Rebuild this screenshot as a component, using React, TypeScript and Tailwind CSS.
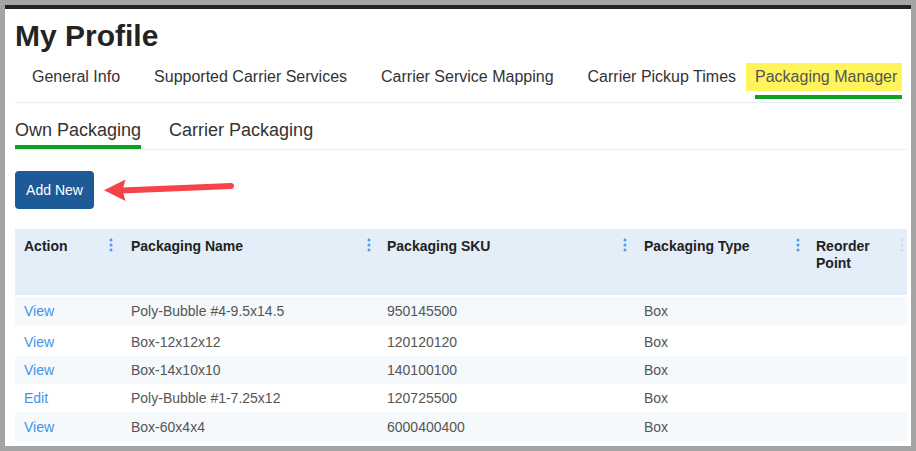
import React from "react";

function Kebab({ faint }: { faint?: boolean }) {
  const c = faint ? "#d3dbe5" : "#4c9bef";
  return (
    <svg width="4" height="14" viewBox="0 0 4 14" className="block">
      <circle cx="2" cy="2" r="1.5" fill={c} />
      <circle cx="2" cy="7" r="1.5" fill={c} />
      <circle cx="2" cy="12" r="1.5" fill={c} />
    </svg>
  );
}

const rows = [
  { a: "View", n: "Poly-Bubble #4-9.5x14.5", s: "950145500", t: "Box", h: "h-[28px]", bg: "bg-[#f5f9fc]" },
  { a: "View", n: "Box-12x12x12", s: "120120120", t: "Box", h: "h-[31px] pt-[2px]", bg: "bg-white" },
  { a: "View", n: "Box-14x10x10", s: "140100100", t: "Box", h: "h-[28px]", bg: "bg-[#f5f9fc]" },
  { a: "Edit", n: "Poly-Bubble #1-7.25x12", s: "120725500", t: "Box", h: "h-[28px]", bg: "bg-white" },
  { a: "View", n: "Box-60x4x4", s: "6000400400", t: "Box", h: "h-[29px]", bg: "bg-[#f5f9fc]" },
];

export default function App() {
  return (
    <div className="w-[916px] h-[451px] bg-[#a4a4a4] p-[5px] font-['Liberation_Sans',Arial,sans-serif]">
      <div className="w-[906px] h-[441px] bg-white border-t-[4px] border-[#222222] overflow-hidden">
        <div className="pl-[10px] pr-[4px]">
          {/* Title */}
          <h1 className="mt-[9px] text-[30px] leading-[36px] font-bold text-[#232323]">My Profile</h1>

          {/* Main tabs */}
          <div className="mt-[9px] border-b border-[#e4eff6] pb-[3px]">
            <div className="flex pl-[17px] text-[16px] text-[#333333]">
              <div className="flex flex-col mr-[34px]">
                <div className="h-[28px] flex items-center leading-[24px]">General Info</div>
                <div className="h-[4px] mt-[4px]" />
              </div>
              <div className="flex flex-col mr-[34px]">
                <div className="h-[28px] flex items-center leading-[24px]">Supported Carrier Services</div>
                <div className="h-[4px] mt-[4px]" />
              </div>
              <div className="flex flex-col mr-[34px]">
                <div className="h-[28px] flex items-center leading-[24px]">Carrier Service Mapping</div>
                <div className="h-[4px] mt-[4px]" />
              </div>
              <div className="flex flex-col mr-[10px]">
                <div className="h-[28px] flex items-center leading-[24px]">Carrier Pickup Times</div>
                <div className="h-[4px] mt-[4px]" />
              </div>
              <div className="flex flex-col">
                <div className="h-[28px] flex items-center leading-[24px] bg-[#fff45c] pl-[9px] pr-[5px] text-[#555555]">
                  Packaging Manager
                </div>
                <div className="h-[4px] mt-[4px] ml-[9px] bg-[#0ca11e]" />
              </div>
            </div>
          </div>

          {/* Sub tabs */}
          <div className="border-b border-[#e4eff6] flex text-[18px] text-[#333333]">
            <div className="flex flex-col mr-[28px]">
              <div className="mt-[15px] h-[24px] leading-[24px]">Own Packaging</div>
              <div className="mt-[3px] h-[4px] bg-[#0ca11e]" />
            </div>
            <div className="flex flex-col">
              <div className="mt-[15px] h-[24px] leading-[24px]">Carrier Packaging</div>
              <div className="mt-[3px] h-[4px]" />
            </div>
          </div>

          {/* Button row */}
          <div className="relative mt-[21px] h-[38px]">
            <button className="h-[38px] w-[79px] rounded-[4px] bg-[#1d5b98] text-white text-[14px] leading-[38px] text-center">
              Add New
            </button>
            <svg
              className="absolute left-[85px] top-[4px]"
              width="140"
              height="30"
              viewBox="0 0 140 30"
            >
              <line x1="22" y1="15.6" x2="131" y2="11" stroke="#f6434a" strokeWidth="6" strokeLinecap="round" />
              <path d="M4 15.2 L25.5 4.5 L22.5 15.3 L25.5 26 Z" fill="#f6434a" />
            </svg>
          </div>

          {/* Table */}
          <div className="mt-[20px] w-[892px] overflow-hidden">
            <div className="grid grid-cols-[107px_256px_257px_172px_100px] h-[66px] bg-[#e4eef9] text-[14px] leading-[17px] font-bold text-[#222222]">
              <div className="relative pl-[9px] pt-[9px]">
                Action
                <div className="absolute right-[9px] top-[9px]"><Kebab /></div>
              </div>
              <div className="relative pl-[9px] pt-[9px]">
                Packaging Name
                <div className="absolute right-[7px] top-[9px]"><Kebab /></div>
              </div>
              <div className="relative pl-[9px] pt-[9px]">
                Packaging SKU
                <div className="absolute right-[8px] top-[9px]"><Kebab /></div>
              </div>
              <div className="relative pl-[9px] pt-[9px]">
                Packaging Type
                <div className="absolute right-[7px] top-[9px]"><Kebab /></div>
              </div>
              <div className="relative pl-[9px] pt-[9px]">
                <div className="w-[70px]">Reorder Point</div>
                <div className="absolute left-[93px] top-[9px]"><Kebab faint /></div>
              </div>
            </div>
            <div className="mt-[2px]">
              {rows.map((r, i) => (
                <div
                  key={i}
                  className={`grid grid-cols-[107px_256px_257px_172px_100px] items-center text-[14px] leading-[18px] text-[#555555] ${r.h} ${r.bg}`}
                >
                  <div className="pl-[9px] text-[#3f93e8]">{r.a}</div>
                  <div className="pl-[9px]">{r.n}</div>
                  <div className="pl-[9px]">{r.s}</div>
                  <div className="pl-[9px]">{r.t}</div>
                  <div className="pl-[9px]" />
                </div>
              ))}
            </div>
          </div>
        </div>
      </div>
    </div>
  );
}
